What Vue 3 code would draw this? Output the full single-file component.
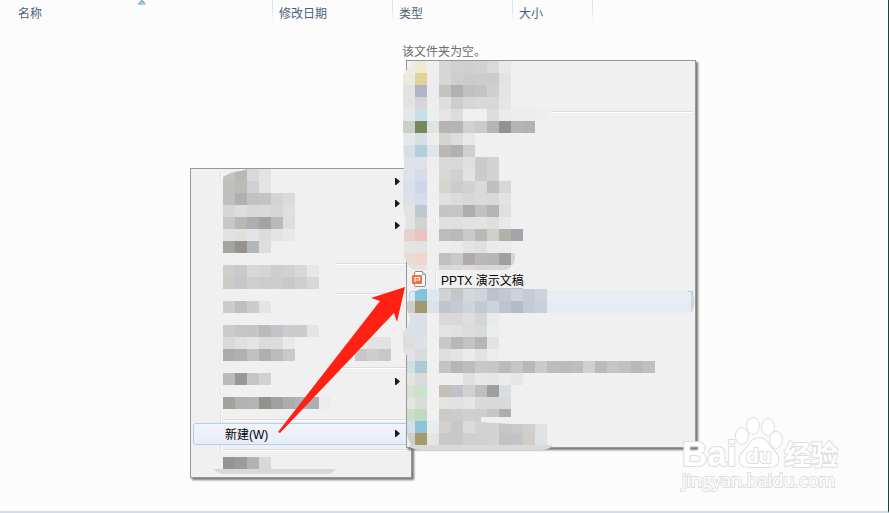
<template>
    <main class="explorer">
        <table class="file-list">
            <colgroup>
                <col class="col-name" />
                <col class="col-date" />
                <col class="col-type" />
                <col class="col-size" />
                <col />
            </colgroup>
            <thead>
                <tr>
                    <th v-for="column in columns" :key="column">{{ column }}</th>
                    <td></td>
                </tr>
            </thead>
            <tbody>
                <tr>
                    <td class="empty" colspan="5">该文件夹为空。</td>
                </tr>
            </tbody>
        </table>
        <svg class="sort-mark" width="8" height="5" viewBox="0 0 8 5">
            <path d="M0 5 4 1 8 5Z" fill="#9fd4e8" />
            <path d="M0 4.5 4 .5 7 3.5" fill="none" stroke="#3c6c86" />
        </svg>

        <ul class="menu context-menu">
            <li v-for="(item, index) in contextItems" :key="index" :class="item.kind">
                <button v-if="!item.kind.startsWith('separator')" type="button" :aria-label="item.label || '菜单项'">
                    <span>{{ item.label }}</span>
                    <svg v-if="item.submenu" width="5" height="7" viewBox="0 0 5 7">
                        <path d="M0 0H1L5 3.5 1 7H0Z" fill="#1a1a1a" />
                    </svg>
                </button>
            </li>
        </ul>

        <ul class="menu new-menu">
            <li v-for="(item, index) in newItems" :key="index" :class="item.kind">
                <button v-if="!item.kind.startsWith('separator')" type="button" :aria-label="item.label || '菜单项'">
                    <svg v-if="item.icon" width="16" height="18" viewBox="0 0 16 18">
                        <path d="M2.5 3Q2.5 1.5 4 1.5H10.5L13.5 4.5V15Q13.5 16.5 12 16.5H4Q2.5 16.5 2.5 15Z" fill="#fff" stroke="#888" />
                        <path d="M10.5 1.5V4.5H13.5" fill="#eee" stroke="#999" />
                        <rect y="5" width="10" height="9" rx="1" fill="#f3703a" />
                        <path d="M3 12V7.5H7.5V10H3" fill="none" stroke="#fff" stroke-width="1.2" />
                    </svg>
                    <span>{{ item.label }}</span>
                </button>
            </li>
        </ul>

        <svg class="overlay" width="889" height="513" viewBox="0 0 889 513" aria-hidden="true">
            <defs>
                <clipPath id="leftArea">
                    <path d="M223 177Q232 171 241 171L250 168H420V480H200V177Z" />
                </clipPath>
                <clipPath id="rightArea">
                    <path d="M415 61Q409 67 403 75V130L404 165 403 175V206Q404 216 406 222L404 232V256Q408 269 416 270H505Q514 268 515 258V253H530V289H700V450H416Q409 445 407 434V355L403 353V332L407 328Q410 321 410 317Q406 309 407 303Q411 291 421 289H520V270H530V253L560 240V61Z" />
                </clipPath>
            </defs>
            <path d="M220.5 171V181M220.5 358V363M220.5 388V394M220.5 411V423M220.5 445V451M435.5 220V224M435.5 271V289" stroke="#dedede" />
            <path d="M221.5 171V181M221.5 358V363M221.5 388V394M221.5 411V423M221.5 445V451M436.5 220V224M436.5 271V289" stroke="#fff" />
            <path d="M409.5 301V294Q409.5 291.5 412 291.5H418" fill="#e6f1fb" stroke="#a9cdf0" />
            <g clip-path="url(#leftArea)" shape-rendering="crispEdges">
                <rect v-for="cell in leftCells" :key="cell.id" :x="cell.x" :y="cell.y" width="12" :height="cell.height" :fill="cell.fill" />
            </g>
            <g clip-path="url(#rightArea)" shape-rendering="crispEdges">
                <rect v-for="cell in rightCells" :key="cell.id" :x="cell.x" :y="cell.y" width="12" :height="cell.height" :fill="cell.fill" />
            </g>
            <path d="M439 288.5H523" stroke="#bdbdbd" />
            <path d="M214 469H336Q333 474 326 474H222Q216 473 214 469Z" fill="#d8d8d8" />
            <path d="M408 445H553Q550 450 540 450H422Q412 450 408 445Z" fill="#dadada" />
            <path d="M481 417H511V421H547V424H510L481 422Z" fill="#efefef" />
            <path d="M691 291Q698 301 691 313Z" fill="#d3d5d8" />
            <path d="M688 291.5H692.5V295" fill="none" stroke="#a9cdf5" />
            <path d="M278 432 380 301 371 298 405 287 397 322 394 313 280 433Z" fill="#ff2113" />
        </svg>

        <svg class="watermark" width="170" height="80" viewBox="0 0 170 80">
            <g class="mark">
                <text class="brand" x="2" y="49">Bai</text>
                <ellipse cx="62" cy="19" rx="6" ry="8" />
                <ellipse cx="73" cy="8" rx="6" ry="8" transform="translate(0 1)" />
                <ellipse cx="88" cy="10" rx="6" ry="8" />
                <ellipse cx="96" cy="23" rx="6" ry="8" />
                <path d="M79 21C87 21 89 30 95 35C101 41 99 50 89 50H69C59 50 57 41 63 35C69 30 71 21 79 21Z" />
                <text class="du" x="66" y="46">du</text>
                <text class="cjk" x="104" y="48">经验</text>
                <text class="site" x="2" y="70">jingyan.baidu.com</text>
            </g>
        </svg>
    </main>
</template>

<script setup>
const columns = ['名称', '修改日期', '类型', '大小'];

const plain = (count) => Array.from({ length: count }, () => ({ kind: 'item' }));
const parent = { kind: 'item', submenu: true };

const contextItems = [
    parent,
    parent,
    parent,
    ...plain(1),
    { kind: 'separator' },
    ...plain(1),
    { kind: 'separator' },
    ...plain(3),
    { kind: 'separator' },
    parent,
    ...plain(1),
    { kind: 'separator full' },
    { kind: 'item active', label: '新建(W)', submenu: true },
    { kind: 'separator full' },
    ...plain(1)
];

const newItems = [
    ...plain(2),
    { kind: 'separator' },
    ...plain(7),
    { kind: 'item', label: 'PPTX 演示文稿', icon: true },
    { kind: 'item hovered' },
    ...plain(6)
];

// Each row is: top edge, then one colour per 12px cell, "-" leaves a cell clear
const leftRows = [
    '169 c2c2c0 b8b8b6 d8dad9 e2e4e4',
    '181 c0bfbd bcbbb8 cfd0d4 e2e4e5',
    '193 bfbfbf b2b0ad c2c2c2 c4c4c4 d1d3d4 dadada',
    '205 d6d6d4 dcdedd d8d8d8 d9d9d9 d5d5d5 dfdfdf',
    '217 c8c7c5 b9b8b5 acaeb3 a3a3a1 b8b9b8 dcdee1',
    '229 e1e2e2 e0e1dd e3e4e3 dcdcdc e3e3e3 e8e8e8',
    '241 a3a3a2 979190 b5b6b8 dedede',
    '265 cfcdcb c7c9cb d8d8d8 d5d5d4 cdcfcf d1d1d1 d5d9d8 e7e7e7',
    '277 cccbc5 c5c7c9 cfcfcf cccccc cbcecc c9c9c9 cfcfd1 d9d6d7',
    '301 ccccc8 bfbfbf cccccd e2e4e7',
    '325 cdcbca c6c6c6 c5c5c6 bababb c4c4c8 cccccc cbcbcc e3e5e4',
    '337 d9d9da dfe0e2 e5e4e2 dbdbdb dddddc e8e9e9 - - - - - ebebeb e2e2e4 e0e3e3',
    '349 adabab b1afb0 c0c0c0 afafaf c0bbbb c7cacd - - - - - c7c7c7 cecdca c7c7c9',
    '373 bababa 999696 c5c7c6 d1d1d3',
    '397 a5a19d b0b2b4 b2b4b7 93918c a1a1a1 abacae b2b4b8 abafaf ebeced',
    '457 95948e 9a9b9e b4b1b0 d6d9dc'
];

const rightRows = [
    '61 ebebe8 f0ebd0 efefef d6d6d6 d0d2d1 cfcfcf d1d1d1 d9dbda e8e8e8',
    '73 ece9df dfd395 ededf0 d6d6d6 cdcfce cbcbcb cccccc cccccc e3e3e3',
    '85 e3e3e5 b4b4c9 ececee c4c3c0 b0b0af bfc0c2 c4c4c4 cdcfd0 e4e4e4',
    '97 e3e3e3 d4d4d9 ededed dededc cdcdcd d5d6d8 d9d9d9 d8d8d8 e5e5e5',
    '109 e4e8eb c7e0e6 ebeeee e6e5e3 dddddd eff0f0 f0f0f0 dddddd ebebeb ededed ebeded eeeeee',
    '121 c9d0c9 76875d e0e3e1 b6b3b3 b5b5b5 d0d1d2 c9cbc9 b5b5b5 929292 b5b5b5 b0b3b1',
    '133 e7e7e8 d7dee4 ededee d6d3d1 dbdddc e8e8e8',
    '145 d6dfe4 b1d0da dfe6eb bab7b6 b0b0b0 cfd0d1',
    '157 e0e2e8 dce1ea eeeeee dbd9d8 d8d8d8 e0e0e0 cbcacc d2d3d3',
    '169 dee2e9 d4dcea efefef d8d7d5 d0d0d0 e3e3e3 cbcacc d1d3d3',
    '181 dae0e9 ccd6e8 efefef d5d5d0 cacdcc d0d1d1 dad9d6 bfbfbf d6d7d9',
    '193 dce0e8 d5dcea efefef e0e0e0 dcdcdc d7d7d7 dadada d9d9d9 e2e2e2',
    '205 e2e4e2 bdc9cd efefef c7c4c5 c4c8c4 acadaf c1c1c1 b5b4b4 dedfe1',
    '217 e2e4e4 d0d3d2 - e1e0e1 dfdfdf e2e2e2 e4e3e1 dfdfdf e8eaea',
    '229 e5d0d0 eac2c2 efefef bfbdbc b9b9b9 cacaca b9b9b9 d0cfc9 b2b2ab a4a4ab',
    '241 e4e4e4 e1e3e3 efefef ededed ebebeb e3e3e3 e0e0e0 e9ebea ebebeb',
    '253 e8dad4 f2d6cc efefef c2bfbe c9c9cb b0aba8 b7b9bd b7b6b6 a19f9e d5d5d7',
    '265 e0e0de e4e4e2 efefef d8d8d6 d9d9d9 dcdcdc d5d5d5 d8d8d8 d6d6d6',
    '289 dae8f4 85c2d8 dfe7f0 d0d2d5 c4c7ca d3d8df cfd4dc bcc1cc c3c7d0 ced3da c5cbd4 cdd3dd',
    '301 cccdc8 a2986d dbe3eb bfc5cf c4cbd5 ccd4e0 c2c9d2 cbd3de bdc4d0 b3bbc7 c2cbd6 c6d0dd',
    '313 dfe2e6 d9dfea - d9d9d7 d8d8d8 dfdddd d4d6d6 e9eaea',
    '325 dde1e8 d8dfe9 - e3e3e1 e1e1e1 dddcdc d9dada ebeeed',
    '337 dcdddd dee2e6 - c8c8c8 b8b7b6 c2c2c2 b7b6b5 e2e3e5',
    '349 e0e2e4 dadbdc - dedfdd e3e3e1 ebebeb e2e2e2 ebeded',
    '361 d4dfe4 accad5 - c5c3c1 b7b6b6 bdbbbc c7c8c9 c4c6c8 bcbbba c5c5c5 b9b7b9 cbcaca bdbdbd bfbaba bdbec4 cfd0d1 bcbab6 c4c5c7 c5c0c0 b9b7bb c0c0c0',
    '373 e3e3e3 dadada - eeeeee eeeeee e0e0e0 e7e8e8 e6e6e6 ebebeb e6e6e6',
    '385 d5e0d6 cbe3cb - c4bfb8 bfc2ca d1d1d0 bebebd a09f9e d9dce0',
    '397 e3e5e3 d8ddd9 - e3e3e1 e2e2e2 e3e6e6 dadada d9d9d9 d9d9d9',
    '409 cdddcd c0d9bf - cec9c4 c9ccd0 d1d0d0 d0cfcf c6c6c6 abadaf',
    '421 d1dfe7 8ec5d6 e9ebed d2d0cf c7c9c8 d9dcdb d3d3d3 d5d3cf c6c6c6 c7c9cc d2d0ce dfe2e5',
    '433 d0cfc5 a79a6c e7e5e3 c8c8c8 c9c8c8 cfcfcd d1d1d1 d3d3cf c2c2c0 c3c4c5 d1ceca dde2e6'
];

const toCells = (rows, left) =>
    rows.flatMap((row) => {
        const [top, ...colors] = row.split(' ');
        return colors
            .map((color, index) => ({
                id: `${top}-${index}`,
                x: left + index * 12,
                y: Number(top),
                height: top === '265' && left === 403 ? 5 : 12,
                fill: `#${color}`
            }))
            .filter((cell) => cell.fill !== '#-');
    });

const leftCells = toCells(leftRows, 223);
const rightCells = toCells(rightRows, 403);
</script>

<style>
body {
    margin: 0;
}
</style>

<style scoped>
.explorer {
    position: relative;
    box-sizing: border-box;
    min-height: 100vh;
    overflow: hidden;
    background: #fcfcfc;
    border-right: 1px solid #24403c;
    border-bottom: 2px solid #d0deec;
    font-family: "Liberation Sans", "Noto Sans CJK SC", sans-serif;
    font-size: 12px;
}

.file-list {
    width: 100%;
    table-layout: fixed;
    border-collapse: collapse;
}

.col-name {
    width: 273px;
}

.col-date,
.col-type {
    width: 120px;
}

.col-size {
    width: 80px;
}

th {
    padding: 0 6px;
    line-height: 28px;
    text-align: left;
    font-weight: normal;
    color: #4c607a;
    background: linear-gradient(#d6e6f5 40%, #fcfcfc 90%) right top / 1px 24px no-repeat;
}

th:first-child {
    padding-left: 18px;
}

.empty {
    padding: 15px 0 0;
    line-height: 18px;
    text-align: center;
    color: #6d6d6d;
}

.sort-mark {
    position: absolute;
    top: 0;
    left: 138px;
}

.menu {
    position: absolute;
    box-sizing: border-box;
    margin: 0;
    padding: 2px;
    list-style: none;
    background: #f0f0f0;
    border: 1px solid #979797;
    box-shadow: 2px 2px 2px #777;
}

.context-menu {
    top: 168px;
    left: 190px;
    width: 222px;
}

.new-menu {
    top: 60px;
    left: 406px;
    width: 290px;
}

.item button {
    display: flex;
    align-items: center;
    justify-content: space-between;
    box-sizing: border-box;
    width: 100%;
    height: 22px;
    padding: 0 8px 2px 31px;
    border: 1px solid transparent;
    border-radius: 3px;
    background: none;
    font: inherit;
    color: #000;
}

.new-menu .item button {
    justify-content: flex-start;
    gap: 13px;
    padding-left: 2px;
}

.item.active button {
    border-color: #aecff7;
    background: linear-gradient(#f2f5f9, #e6edf7);
}

.item.hovered button {
    background: linear-gradient(#e8edf5 50%, #e3ebf5 50%);
}

.separator {
    box-sizing: border-box;
    height: 8px;
    padding: 4px 0 0 142px;
}

.separator.full {
    padding-left: 28px;
}

.separator::before {
    content: "";
    display: block;
    height: 1px;
    background: #dcdcdc;
    border-bottom: 1px solid #fff;
}

.overlay {
    position: absolute;
    top: 0;
    left: 0;
    pointer-events: none;
}

.watermark {
    position: absolute;
    right: 38px;
    bottom: 14px;
}

.mark {
    fill: #fff;
    stroke: #dedede;
    stroke-width: 2px;
    paint-order: stroke;
}

.brand {
    font: bold 35px "Liberation Sans", sans-serif;
}

.du {
    font: bold 21px "Liberation Sans", sans-serif;
}

.cjk {
    font: bold 27px "Noto Sans CJK SC", sans-serif;
}

.site {
    font: 18px "Open Sans", sans-serif;
}
</style>
